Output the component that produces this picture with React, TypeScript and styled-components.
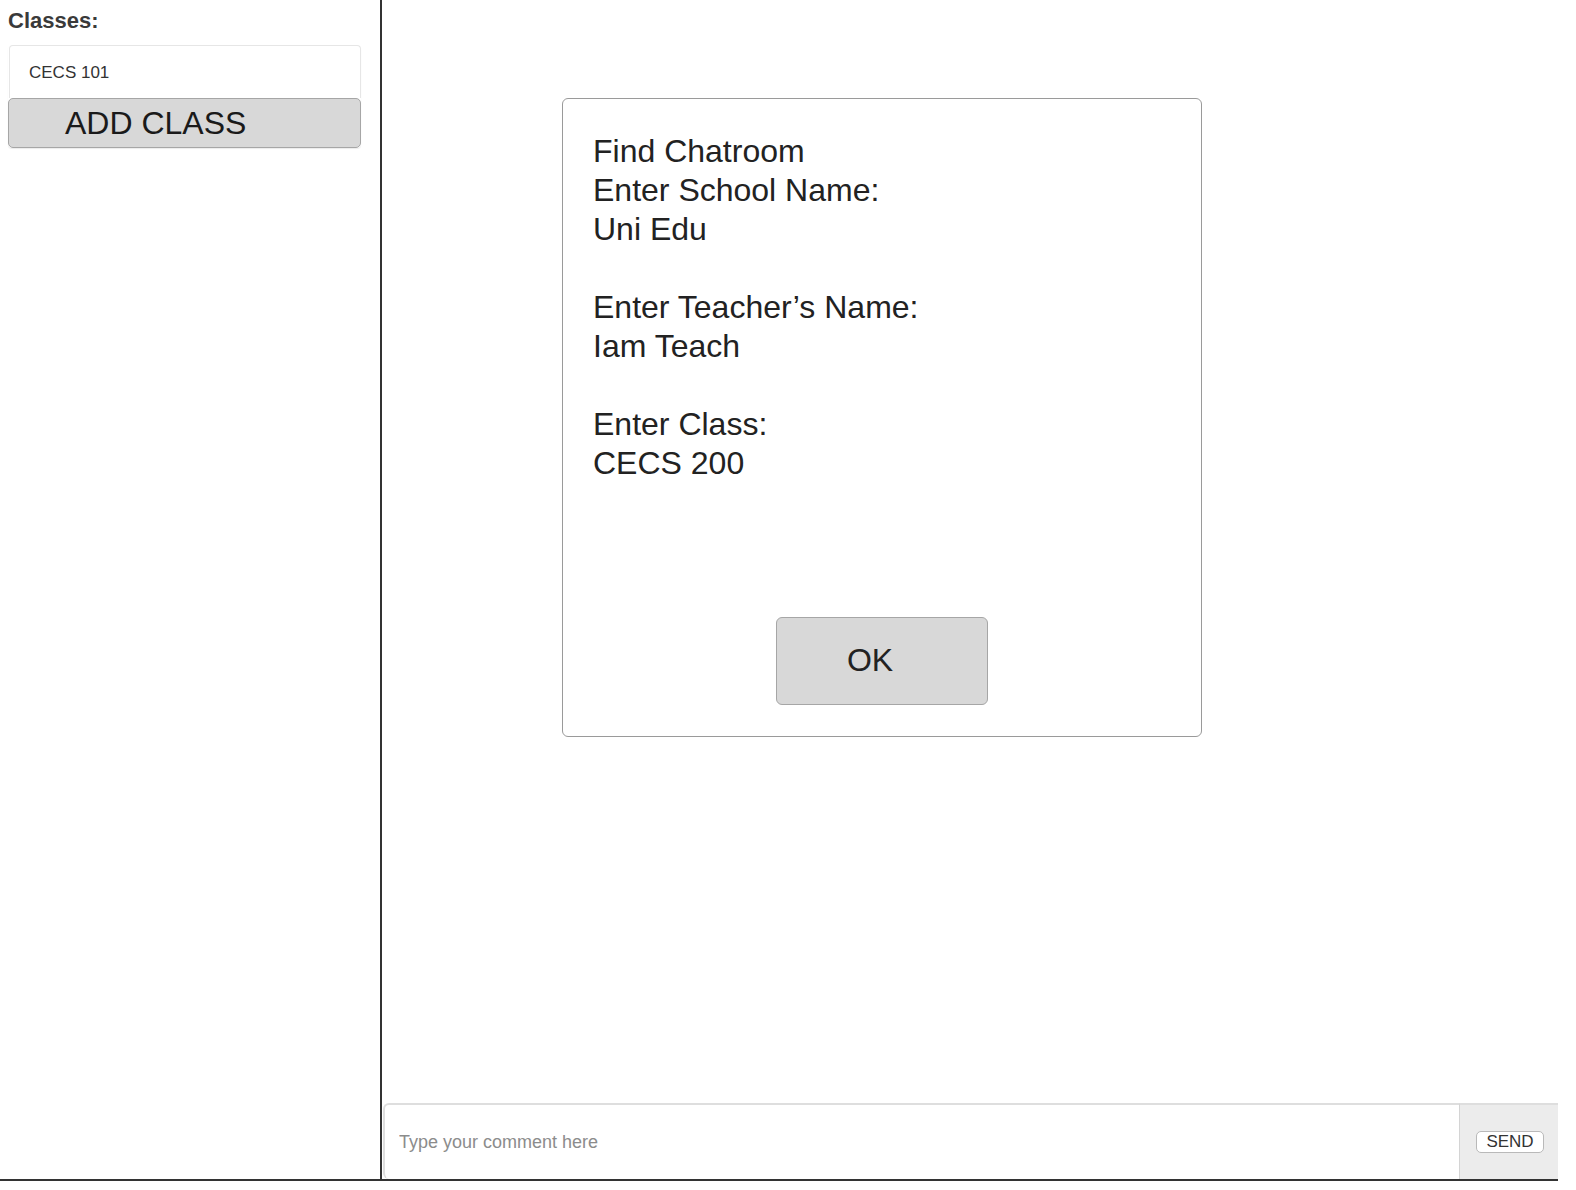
import React from "react";
import styled, { createGlobalStyle } from "styled-components";

const Global = createGlobalStyle`
  html, body { margin: 0; padding: 0; background: #ffffff; }
  body { font-family: "Liberation Sans", Arial, sans-serif; }
  * { box-sizing: border-box; }
`;

const Frame = styled.div`
  width: 1558px;
  height: 1181px;
  display: grid;
  grid-template-columns: 382px 1fr;
  border-bottom: 2px solid #333333;
`;

const Sidebar = styled.aside`
  border-right: 2px solid #333333;
  padding: 8px 19px 0 8px;
  display: flex;
  flex-direction: column;
`;

const SidebarTitle = styled.div`
  font-size: 22px;
  line-height: 26px;
  font-weight: bold;
  color: #3a3a3a;
  margin-bottom: 11px;
`;

const ClassList = styled.div`
  display: flex;
  flex-direction: column;
  border-radius: 4px;
  box-shadow: 0 1px 1px rgba(0, 0, 0, 0.08);
`;

const ClassItem = styled.div`
  height: 53px;
  margin-left: 1px;
  display: flex;
  align-items: center;
  padding: 2px 0 0 19px;
  font-size: 17px;
  color: #333333;
  background: #ffffff;
  border: 1px solid #e6e6e6;
  border-bottom: none;
  border-radius: 4px 4px 0 0;
`;

const AddClassButton = styled.button`
  height: 50px;
  margin: 0;
  display: flex;
  align-items: center;
  padding: 1px 0 0 56px;
  font-family: "Liberation Sans", Arial, sans-serif;
  font-size: 32px;
  color: #1a1a1a;
  background: #d8d8d8;
  border: 1px solid #a6a6a6;
  border-radius: 5px;
  text-align: left;
`;

const Main = styled.main`
  display: flex;
  flex-direction: column;
  min-height: 0;
`;

const Stage = styled.div`
  flex: 1;
  padding: 98px 0 0 180px;
`;

const Dialog = styled.div`
  width: 640px;
  height: 639px;
  border: 1px solid #9a9a9a;
  border-radius: 6px;
  padding: 33px 30px 31px 30px;
  display: flex;
  flex-direction: column;
  background: #ffffff;
`;

const FieldGroup = styled.div`
  font-size: 32px;
  line-height: 39px;
  color: #222222;
  & + & {
    margin-top: 39px;
  }
`;

const Line = styled.div``;

const OkButton = styled.button`
  margin-top: auto;
  align-self: center;
  width: 212px;
  height: 88px;
  padding: 0 24px 2px 0;
  font-family: "Liberation Sans", Arial, sans-serif;
  font-size: 32px;
  color: #222222;
  background: #d8d8d8;
  border: 1px solid #a6a6a6;
  border-radius: 6px;
`;

const Composer = styled.div`
  height: 76px;
  display: flex;
  padding-left: 1px;
`;

const CommentInput = styled.input`
  flex: 1;
  height: 100%;
  margin: 0;
  border: 2px solid #dedede;
  border-right: none;
  border-bottom: none;
  border-radius: 6px 0 0 6px;
  padding: 0 0 0 14px;
  font-family: "Liberation Sans", Arial, sans-serif;
  font-size: 18px;
  color: #333333;
  background: #ffffff;
  outline: none;
  &::placeholder {
    color: #8c8c8c;
  }
`;

const SendPanel = styled.div`
  width: 99px;
  height: 100%;
  display: flex;
  align-items: center;
  justify-content: center;
  padding: 0 0 0 2px;
  background: #ececec;
  border-top: 2px solid #dedede;
  border-left: 1px solid #d4d4d4;
`;

const SendButton = styled.button`
  width: 68px;
  height: 22px;
  padding: 0;
  font-family: "Liberation Sans", Arial, sans-serif;
  font-size: 17px;
  line-height: 20px;
  color: #333333;
  background: #ffffff;
  border: 1px solid #b9b9b9;
  border-radius: 5px;
`;

export default function App() {
  return (
    <>
      <Global />
      <Frame>
        <Sidebar>
          <SidebarTitle>Classes:</SidebarTitle>
          <ClassList>
            <ClassItem>CECS 101</ClassItem>
            <AddClassButton>ADD CLASS</AddClassButton>
          </ClassList>
        </Sidebar>
        <Main>
          <Stage>
            <Dialog>
              <FieldGroup>
                <Line>Find Chatroom</Line>
                <Line>Enter School Name:</Line>
                <Line>Uni Edu</Line>
              </FieldGroup>
              <FieldGroup>
                <Line>Enter Teacher’s Name:</Line>
                <Line>Iam Teach</Line>
              </FieldGroup>
              <FieldGroup>
                <Line>Enter Class:</Line>
                <Line>CECS 200</Line>
              </FieldGroup>
              <OkButton>OK</OkButton>
            </Dialog>
          </Stage>
          <Composer>
            <CommentInput placeholder="Type your comment here" />
            <SendPanel>
              <SendButton>SEND</SendButton>
            </SendPanel>
          </Composer>
        </Main>
      </Frame>
    </>
  );
}
